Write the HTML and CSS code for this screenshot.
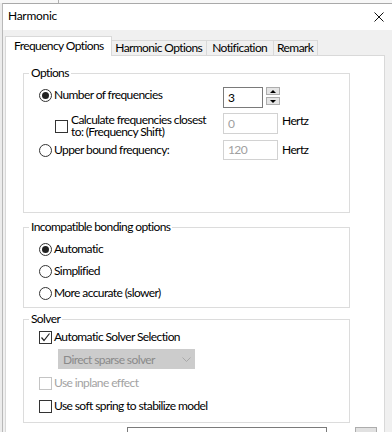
FILE: index.html
```html
<!DOCTYPE html>
<html lang="en">
<head>
  <meta charset="UTF-8">
  <title>Harmonic</title>
  <link rel="stylesheet" href="styles.css">
</head>
<body>

  <div class="backdrop">
    <span class="bd-a">Dallond</span>
    <span class="bd-sep"></span>
    <span class="bd-b">Serial</span>
    <span class="bd-c">Results</span>
  </div>

  <div class="dialog">
    <div class="titlebar">
      <span class="title">Harmonic</span>
      <svg class="close" width="10" height="10" viewBox="0 0 10 10">
        <path d="M0.5 0.5 L9.5 9.5 M9.5 0.5 L0.5 9.5" stroke="#111" stroke-width="1" fill="none"/>
      </svg>
    </div>

    <div class="dialog-body">
      <div class="tabs">
        <div class="tab active">Frequency Options</div>
        <div class="tab t-harm">Harmonic Options</div>
        <div class="tab t-note">Notification</div>
        <div class="tab t-rem">Remark</div>
      </div>

      <div class="panel">

        <fieldset class="group">
          <legend>Options</legend>
          <div class="group-body g-options">
            <div class="row r-num">
              <label class="lbl"><span class="radio on"></span>Number of frequencies</label>
              <div class="spin">
                <div class="spin-box">3</div>
                <div class="spin-btns">
                  <span class="spin-btn"><span class="tri-up"></span></span>
                  <span class="spin-btn"><span class="tri-down"></span></span>
                </div>
              </div>
            </div>
            <div class="row r-shift">
              <label class="lbl indent"><span class="check"></span><span class="two-line">Calculate frequencies closest<br>to: (Frequency Shift)</span></label>
              <div class="field off">0</div>
              <span class="unit top">Hertz</span>
            </div>
            <div class="row r-upper">
              <label class="lbl"><span class="radio"></span>Upper bound frequency:</label>
              <div class="field off">120</div>
              <span class="unit">Hertz</span>
            </div>
          </div>
        </fieldset>

        <fieldset class="group g2">
          <legend>Incompatible bonding options</legend>
          <div class="group-body g-bond">
            <div class="row opt"><label class="lbl"><span class="radio on"></span>Automatic</label></div>
            <div class="row opt"><label class="lbl"><span class="radio"></span>Simplified</label></div>
            <div class="row opt"><label class="lbl"><span class="radio"></span>More accurate (slower)</label></div>
          </div>
        </fieldset>

        <fieldset class="group g3">
          <legend>Solver</legend>
          <div class="group-body g-solver">
            <div class="row opt">
              <label class="lbl"><span class="check">
                <svg width="11" height="11" viewBox="0 0 11 11"><polyline points="1.5,5.5 4,8.5 9.5,1.5" fill="none" stroke="#222" stroke-width="1.2"/></svg>
              </span>Automatic Solver Selection</label>
            </div>
            <div class="select off">
              <span>Direct sparse solver</span>
              <svg width="9" height="5" viewBox="0 0 9 5"><polyline points="0.5,0.5 4.5,4.5 8.5,0.5" fill="none" stroke="#a8a8a8" stroke-width="1"/></svg>
            </div>
            <div class="row opt r-inplane"><label class="lbl disabled"><span class="check dim"></span>Use inplane effect</label></div>
            <div class="row opt r-soft"><label class="lbl"><span class="check"></span>Use soft spring to stabilize model</label></div>
          </div>
        </fieldset>

        <div class="bottom-row">
          <div class="bottom-field"></div>
          <div class="bottom-btn"></div>
        </div>

      </div>
    </div>
  </div>

</body>
</html>
```

FILE: styles.css
```css
body { margin: 0; width: 392px; height: 432px; overflow: hidden; background: #ececec; font-family: Lato, "Noto Sans", sans-serif; font-size: 12px; letter-spacing: -0.6px; color: #000; }

/* window behind the dialog */
.backdrop { height: 3px; overflow: hidden; background: #f7f7f7; display: flex; align-items: flex-start; }
.backdrop span { line-height: 14px; margin-top: -11px; font-size: 12px; }
.bd-a { margin-left: 13px; }
.bd-sep { width: 1px; height: 14px; margin-left: 8px; background: #b0b0b0; }
.bd-b { margin-left: 58px; color: #b8b8b8; }
.bd-c { margin-left: 20px; }

.dialog { margin-left: 2px; border-left: 1px solid #b9b9b9; border-top: 1px solid #a9a9a9; background: #f0f0f0; height: 430px; }
.titlebar { height: 26px; background: #fff; display: flex; align-items: center; justify-content: space-between; padding: 0 8px 0 5px; }
.title { line-height: 14px; margin-top: -2px; letter-spacing: -0.3px; }
.close { margin-top: -1px; }

.dialog-body { padding: 6px 0 0 2px; }

.tabs { display: flex; align-items: flex-end; height: 19px; }
.tab { height: 14px; line-height: 14px; box-sizing: content-box; border: 1px solid #d9d9d9; border-bottom: none; background: #f0f0f0; white-space: nowrap; text-align: center; }
.tab.active { height: 19px; line-height: 17px; padding: 0 7px 0 8px; background: #fff; margin-bottom: -1px; position: relative; z-index: 1; }
.t-harm { width: 94px; border-left: none; }
.t-note { width: 66px; border-left: none; }
.t-rem { width: 43px; border-left: none; }

.panel { width: 380px; height: 380px; box-sizing: border-box; border: 1px solid #d9d9d9; background: #fff; padding-left: 17px; }

.group { width: 327px; box-sizing: border-box; margin: 10px 0 0 0; padding: 0; border: 1px solid #dcdcdc; }
.group legend { margin-left: 5px; padding: 0 2px; line-height: 14px; }
.g2 { margin-top: 7px; }
.g3 { margin-top: 4px; }

.group-body { padding-left: 15px; }
.g-options { padding-top: 7px; padding-bottom: 52px; }
.g-bond { padding-top: 4px; padding-bottom: 3px; }
.g-solver { padding-bottom: 4px; }

.row { display: flex; align-items: center; }
.lbl { display: flex; align-items: center; gap: 2px; line-height: 14px; white-space: nowrap; }
.r-num, .r-shift, .r-upper { align-items: flex-start; }
.r-num { height: 21px; }
.r-shift { height: 21px; margin-top: 5px; }
.r-upper { height: 20px; margin-top: 6px; align-items: center; }
.g-options .lbl { width: 184px; box-sizing: border-box; }
.r-num .lbl { margin-top: 1px; }
.lbl.indent { padding-left: 16px; gap: 3px; margin-top: 1px; }
.two-line { line-height: 12px; white-space: nowrap; }

.opt { height: 22px; }
.r-inplane { margin-top: 3px; }
.r-soft { height: 24px; }

.radio { width: 13px; height: 13px; box-sizing: border-box; border: 1px solid #333; border-radius: 50%; background: #fff; display: flex; align-items: center; justify-content: center; flex: none; }
.radio.on::after { content: ""; width: 7px; height: 7px; border-radius: 50%; background: #222; }

.check { width: 13px; height: 13px; box-sizing: border-box; border: 1px solid #333; background: #fff; display: flex; align-items: center; justify-content: center; flex: none; }
.check.dim { border-color: #c4c4c4; }
.lbl.disabled { color: #a3a3a3; }

.spin { display: flex; gap: 3px; align-items: flex-start; }
.spin-box { width: 40px; height: 21px; box-sizing: border-box; border: 1px solid #7a7a7a; padding-left: 4px; line-height: 19px; }
.spin-btns { display: flex; flex-direction: column; gap: 2px; }
.spin-btn { width: 14px; height: 8px; box-sizing: border-box; border: 1px solid #adadad; background: #e5e5e5; display: flex; align-items: center; justify-content: center; }
.tri-up { width: 0; height: 0; border-left: 3px solid transparent; border-right: 3px solid transparent; border-bottom: 3px solid #000; }
.tri-down { width: 0; height: 0; border-left: 3px solid transparent; border-right: 3px solid transparent; border-top: 3px solid #000; }

.field { width: 55px; height: 21px; box-sizing: border-box; border: 1px solid #7a7a7a; padding-left: 4px; line-height: 19px; }
.field.off { border-color: #d2d2d2; color: #a0a0a0; }
.r-upper .field { height: 20px; line-height: 18px; }
.unit { margin-left: 4px; line-height: 14px; }
.unit.top { margin-top: 1px; }

.select { width: 137px; height: 20px; box-sizing: border-box; margin: 1px 0 0 19px; padding: 0 3px 0 4px; display: flex; align-items: center; justify-content: space-between; background: #ccc; border: 1px solid #ccc; color: #8a8a8a; }

.bottom-row { display: flex; margin-top: 4px; }
.bottom-field { width: 200px; height: 20px; margin-left: 104px; box-sizing: border-box; border: 1px solid #7a7a7a; }
.bottom-btn { width: 22px; height: 20px; margin-left: 28px; box-sizing: border-box; border: 1px solid #adadad; background: #e1e1e1; }
```
